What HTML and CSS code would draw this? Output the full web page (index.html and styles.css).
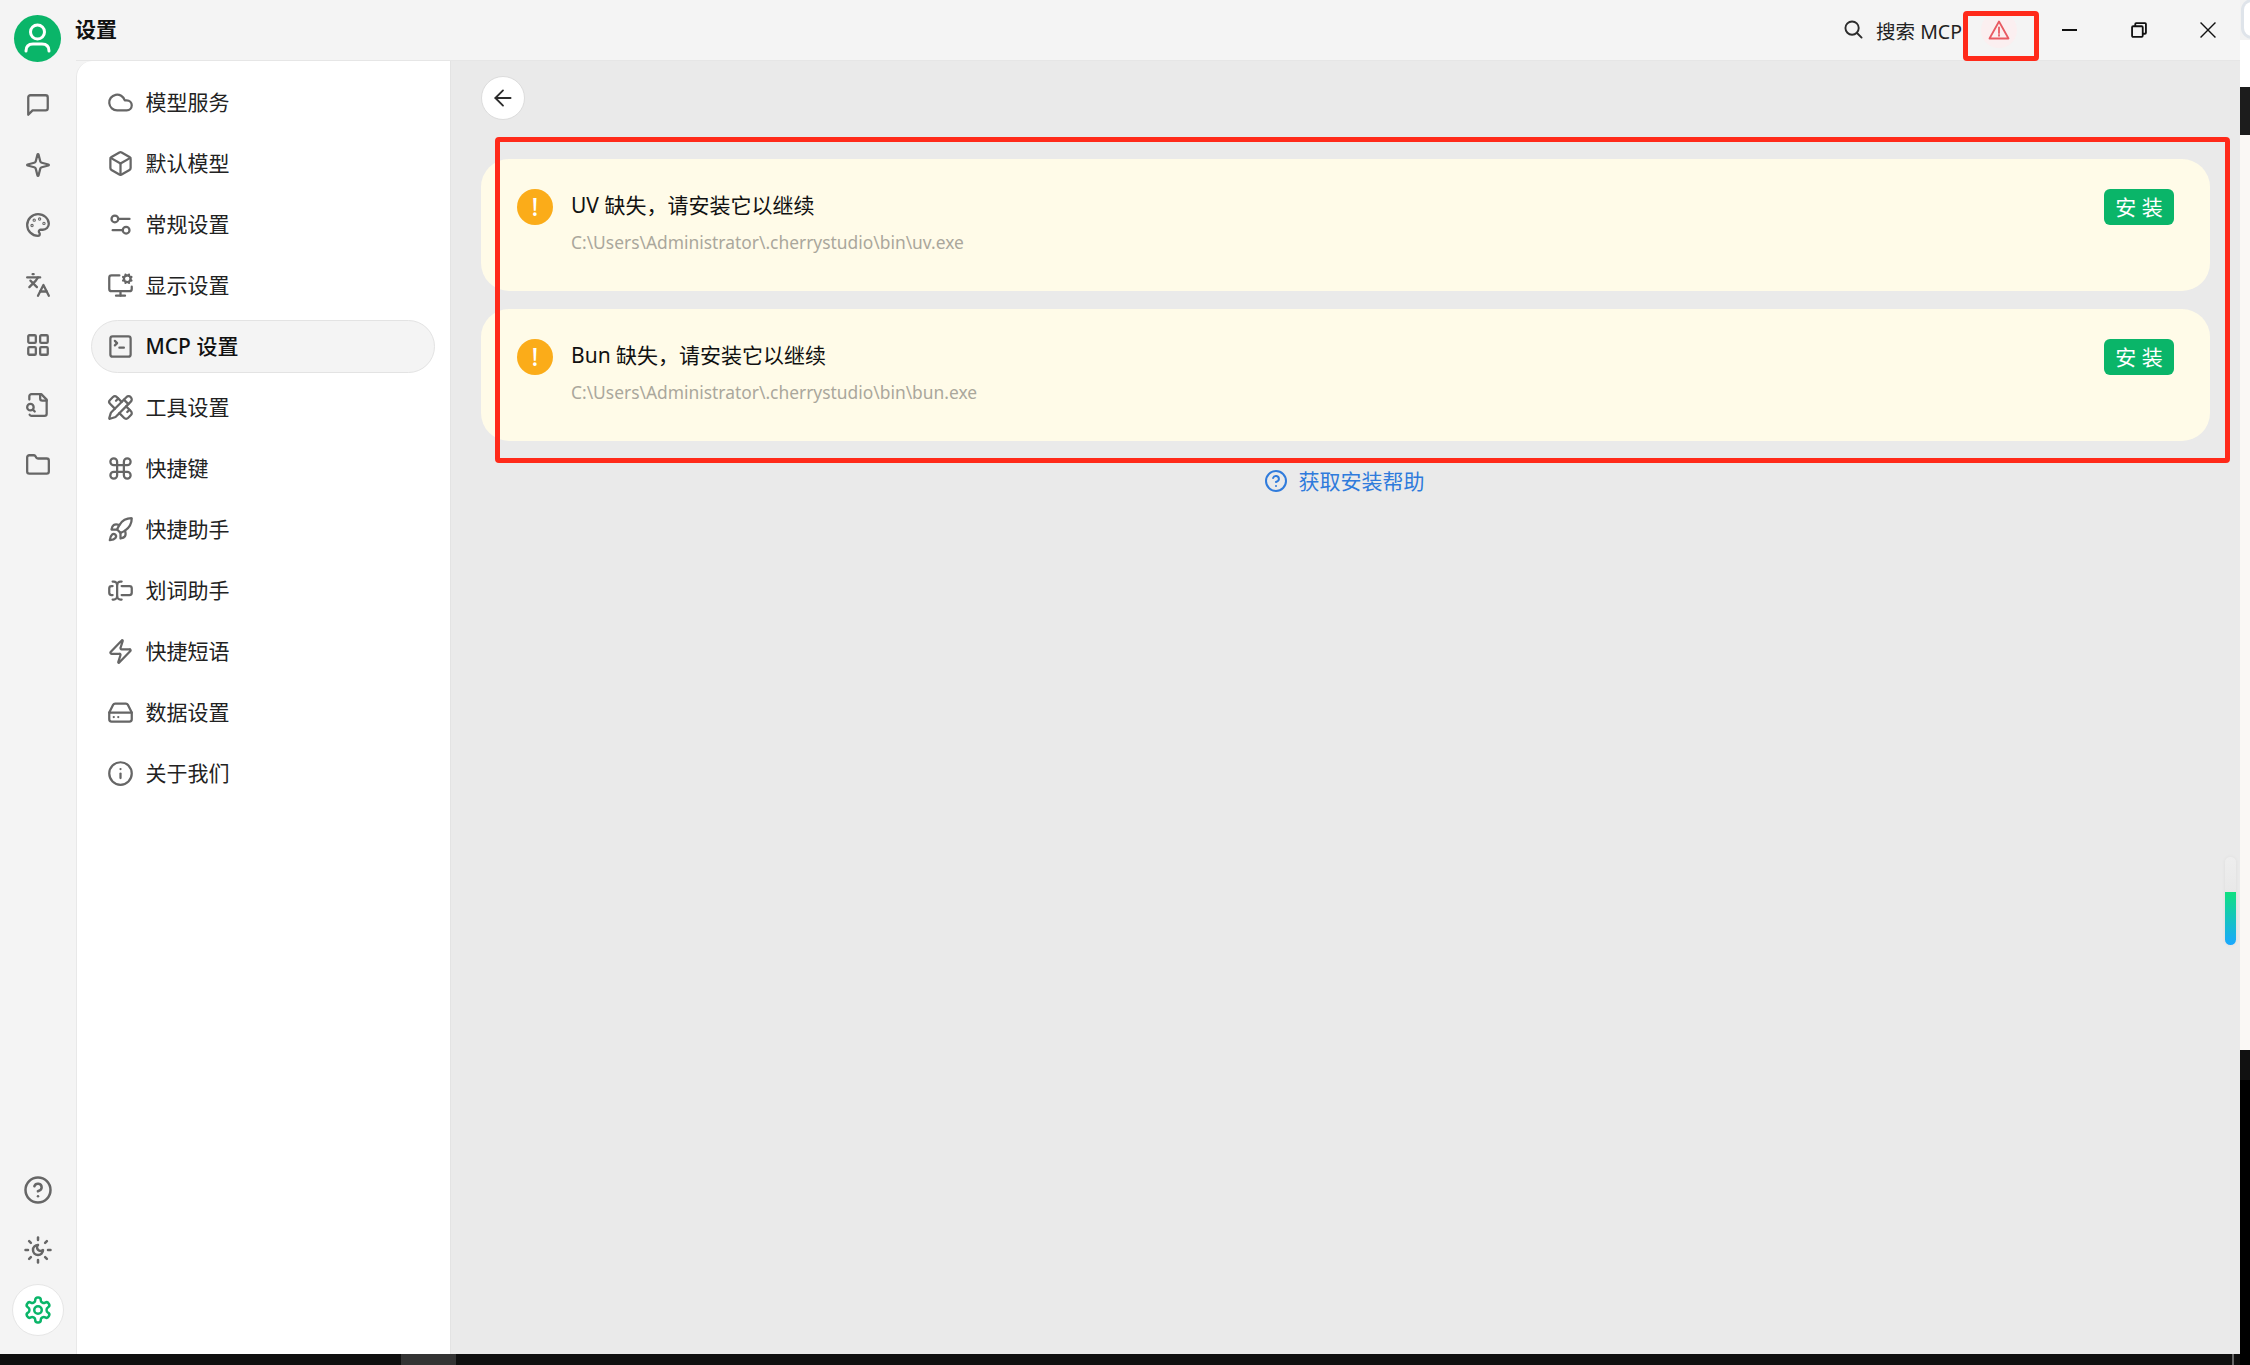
FILE: index.html
```html
<!DOCTYPE html>
<html lang="zh-CN">
<head>
<meta charset="utf-8">
<title>设置</title>
<link rel="stylesheet" href="styles.css">
</head>
<body>
<svg class="sprite" aria-hidden="true">
  <symbol id="i-chat" viewBox="0 0 24 24"><path d="M21 15a2 2 0 0 1-2 2H7l-4 4V5a2 2 0 0 1 2-2h14a2 2 0 0 1 2 2z"/></symbol>
  <symbol id="i-sparkle" viewBox="0 0 24 24"><path d="M9.937 15.5A2 2 0 0 0 8.5 14.063l-6.135-1.582a.5.5 0 0 1 0-.962L8.5 9.936A2 2 0 0 0 9.937 8.5l1.582-6.135a.5.5 0 0 1 .963 0L14.063 8.5A2 2 0 0 0 15.5 9.937l6.135 1.581a.5.5 0 0 1 0 .964L15.5 14.063a2 2 0 0 0-1.437 1.437l-1.582 6.135a.5.5 0 0 1-.963 0z"/></symbol>
  <symbol id="i-palette" viewBox="0 0 24 24"><circle cx="13.5" cy="6.5" r=".5"/><circle cx="17.5" cy="10.5" r=".5"/><circle cx="8.5" cy="7.5" r=".5"/><circle cx="6.5" cy="12.5" r=".5"/><path d="M12 2C6.5 2 2 6.5 2 12s4.5 10 10 10c.926 0 1.648-.746 1.648-1.688 0-.437-.18-.835-.437-1.125-.29-.289-.438-.652-.438-1.125a1.64 1.64 0 0 1 1.668-1.668h1.996c3.051 0 5.555-2.503 5.555-5.554C21.965 6.012 17.461 2 12 2z"/></symbol>
  <symbol id="i-lang" viewBox="0 0 24 24"><path d="m5 8 6 6"/><path d="m4 14 6-6 2-3"/><path d="M2 5h12"/><path d="M7 2h1"/><path d="m22 22-5-10-5 10"/><path d="M14 18h6"/></symbol>
  <symbol id="i-grid" viewBox="0 0 24 24"><rect x="3" y="3" width="7" height="7" rx="1"/><rect x="14" y="3" width="7" height="7" rx="1"/><rect x="14" y="14" width="7" height="7" rx="1"/><rect x="3" y="14" width="7" height="7" rx="1"/></symbol>
  <symbol id="i-filesearch" viewBox="0 0 24 24"><path d="M14 2v4a2 2 0 0 0 2 2h4"/><path d="M4.268 21a2 2 0 0 0 1.727 1H18a2 2 0 0 0 2-2V7l-5-5H6a2 2 0 0 0-2 2v3"/><path d="m9 18-1.5-1.5"/><circle cx="5" cy="14" r="3"/></symbol>
  <symbol id="i-folder" viewBox="0 0 24 24"><path d="M20 20a2 2 0 0 0 2-2V8a2 2 0 0 0-2-2h-7.9a2 2 0 0 1-1.69-.9L9.6 3.9A2 2 0 0 0 7.93 3H4a2 2 0 0 0-2 2v13a2 2 0 0 0 2 2Z"/></symbol>
  <symbol id="i-help" viewBox="0 0 24 24"><circle cx="12" cy="12" r="10"/><path d="M9.09 9a3 3 0 0 1 5.83 1c0 2-3 3-3 3"/><path d="M12 17h.01"/></symbol>
  <symbol id="i-sunmoon" viewBox="0 0 24 24"><path d="M12 8a2.83 2.83 0 0 0 4 4 4 4 0 1 1-4-4"/><path d="M12 2v2"/><path d="M12 20v2"/><path d="m4.9 4.9 1.4 1.4"/><path d="m17.7 17.7 1.4 1.4"/><path d="M2 12h2"/><path d="M20 12h2"/><path d="m6.3 17.7-1.4 1.4"/><path d="m19.1 4.9-1.4 1.4"/></symbol>
  <symbol id="i-gear" viewBox="0 0 24 24"><path d="M12.22 2h-.44a2 2 0 0 0-2 2v.18a2 2 0 0 1-1 1.73l-.43.25a2 2 0 0 1-2 0l-.15-.08a2 2 0 0 0-2.73.73l-.22.38a2 2 0 0 0 .73 2.73l.15.1a2 2 0 0 1 1 1.72v.51a2 2 0 0 1-1 1.74l-.15.09a2 2 0 0 0-.73 2.73l.22.38a2 2 0 0 0 2.73.73l.15-.08a2 2 0 0 1 2 0l.43.25a2 2 0 0 1 1 1.73V20a2 2 0 0 0 2 2h.44a2 2 0 0 0 2-2v-.18a2 2 0 0 1 1-1.73l.43-.25a2 2 0 0 1 2 0l.15.08a2 2 0 0 0 2.73-.73l.22-.39a2 2 0 0 0-.73-2.73l-.15-.08a2 2 0 0 1-1-1.74v-.5a2 2 0 0 1 1-1.74l.15-.09a2 2 0 0 0 .73-2.73l-.22-.38a2 2 0 0 0-2.73-.73l-.15.08a2 2 0 0 1-2 0l-.43-.25a2 2 0 0 1-1-1.73V4a2 2 0 0 0-2-2z"/><circle cx="12" cy="12" r="3"/></symbol>
  <symbol id="i-cloud" viewBox="0 0 24 24"><path d="M17.5 19H9a7 7 0 1 1 6.71-9h1.79a4.5 4.5 0 1 1 0 9Z"/></symbol>
  <symbol id="i-box" viewBox="0 0 24 24"><path d="M21 8a2 2 0 0 0-1-1.73l-7-4a2 2 0 0 0-2 0l-7 4A2 2 0 0 0 3 8v8a2 2 0 0 0 1 1.73l7 4a2 2 0 0 0 2 0l7-4A2 2 0 0 0 21 16Z"/><path d="m3.3 7 8.7 5 8.7-5"/><path d="M12 22V12"/></symbol>
  <symbol id="i-sliders" viewBox="0 0 24 24"><path d="M20 7h-9"/><path d="M14 17H5"/><circle cx="17" cy="17" r="3"/><circle cx="7" cy="7" r="3"/></symbol>
  <symbol id="i-monitor" viewBox="0 0 24 24"><path d="M12 17v4"/><path d="m14.305 7.53.923-.382"/><path d="m15.228 4.852-.923-.383"/><path d="m16.852 3.228-.383-.924"/><path d="m16.852 8.772-.383.923"/><path d="m19.148 3.228.383-.924"/><path d="m19.53 9.696-.382-.924"/><path d="m20.772 4.852.924-.383"/><path d="m20.772 7.148.924.383"/><path d="M22 13v2a2 2 0 0 1-2 2H4a2 2 0 0 1-2-2V5a2 2 0 0 1 2-2h7"/><path d="M8 21h8"/><circle cx="18" cy="6" r="3"/></symbol>
  <symbol id="i-terminal" viewBox="0 0 24 24"><path d="m7 11 2-2-2-2"/><path d="M11 13h4"/><rect x="3" y="3" width="18" height="18" rx="2"/></symbol>
  <symbol id="i-tools" viewBox="0 0 24 24"><path d="M13 7 8.7 2.7a2.41 2.41 0 0 0-3.4 0L2.7 5.3a2.41 2.41 0 0 0 0 3.4L7 13"/><path d="m8 6 2-2"/><path d="m18 16 2-2"/><path d="m17 11 4.3 4.3c.94.94.94 2.46 0 3.4l-2.6 2.6c-.94.94-2.46.94-3.4 0L11 17"/><path d="M21.174 6.812a1 1 0 0 0-3.986-3.987L3.842 16.174a2 2 0 0 0-.5.83l-1.321 4.352a.5.5 0 0 0 .623.622l4.353-1.32a2 2 0 0 0 .83-.497z"/><path d="m15 5 4 4"/></symbol>
  <symbol id="i-command" viewBox="0 0 24 24"><path d="M15 6v12a3 3 0 1 0 3-3H6a3 3 0 1 0 3 3V6a3 3 0 1 0-3 3h12a3 3 0 1 0-3-3"/></symbol>
  <symbol id="i-rocket" viewBox="0 0 24 24"><path d="M4.5 16.5c-1.5 1.26-2 5-2 5s3.74-.5 5-2c.71-.84.7-2.13-.09-2.91a2.18 2.18 0 0 0-2.91-.09z"/><path d="m12 15-3-3a22 22 0 0 1 2-3.95A12.88 12.88 0 0 1 22 2c0 2.72-.78 7.5-6 11a22.35 22.35 0 0 1-4 2z"/><path d="M9 12H4s.55-3.03 2-4c1.62-1.08 5 0 5 0"/><path d="M12 15v5s3.03-.55 4-2c1.08-1.62 0-5 0-5"/></symbol>
  <symbol id="i-cursor" viewBox="0 0 24 24"><path d="M5 4h1a3 3 0 0 1 3 3 3 3 0 0 1 3-3h1"/><path d="M13 20h-1a3 3 0 0 1-3-3 3 3 0 0 1-3 3H5"/><path d="M5 16H4a2 2 0 0 1-2-2v-4a2 2 0 0 1 2-2h1"/><path d="M13 8h7a2 2 0 0 1 2 2v4a2 2 0 0 1-2 2h-7"/><path d="M9 7v10"/></symbol>
  <symbol id="i-zap" viewBox="0 0 24 24"><path d="M4 14a1 1 0 0 1-.78-1.63l9.9-10.2a.5.5 0 0 1 .86.46l-1.92 6.02A1 1 0 0 0 13 10h7a1 1 0 0 1 .78 1.63l-9.9 10.2a.5.5 0 0 1-.86-.46l1.92-6.02A1 1 0 0 0 11 14z"/></symbol>
  <symbol id="i-drive" viewBox="0 0 24 24"><path d="M22 12H2"/><path d="M5.45 5.11 2 12v6a2 2 0 0 0 2 2h16a2 2 0 0 0 2-2v-6l-3.45-6.89A2 2 0 0 0 16.76 4H7.24a2 2 0 0 0-1.79 1.11z"/><path d="M6 16h.01"/><path d="M10 16h.01"/></symbol>
  <symbol id="i-info" viewBox="0 0 24 24"><circle cx="12" cy="12" r="10"/><path d="M12 16v-4"/><path d="M12 8h.01"/></symbol>
</svg>

<div class="page">
  <div class="window">
    <aside class="rail">
      <div class="avatar">
        <svg class="avatar-icon" viewBox="0 0 47 47"><circle cx="23.5" cy="17" r="7"/><path d="M12 36c0-5 3-7 7-7h9c4 0 7 2 7 7"/></svg>
      </div>
      <nav class="rail-list">
        <div class="rail-item"><svg class="icon rail-icon"><use href="#i-chat"/></svg></div>
        <div class="rail-item"><svg class="icon rail-icon"><use href="#i-sparkle"/></svg></div>
        <div class="rail-item"><svg class="icon rail-icon"><use href="#i-palette"/></svg></div>
        <div class="rail-item"><svg class="icon rail-icon"><use href="#i-lang"/></svg></div>
        <div class="rail-item"><svg class="icon rail-icon"><use href="#i-grid"/></svg></div>
        <div class="rail-item"><svg class="icon rail-icon"><use href="#i-filesearch"/></svg></div>
        <div class="rail-item"><svg class="icon rail-icon"><use href="#i-folder"/></svg></div>
      </nav>
      <div class="rail-bottom">
        <div class="rail-item"><svg class="icon rail-icon-lg"><use href="#i-help"/></svg></div>
        <div class="rail-item"><svg class="icon rail-icon-lg"><use href="#i-sunmoon"/></svg></div>
        <div class="rail-item"><span class="rail-active"><svg class="icon rail-icon-lg icon-green"><use href="#i-gear"/></svg></span></div>
      </div>
    </aside>

    <div class="main">
      <header class="titlebar">
        <div class="app-title">设置</div>
        <div class="title-actions">
          <div class="search">
            <svg class="icon search-icon" viewBox="0 0 20 20"><circle cx="8.500" cy="8.500" r="7"/><path d="m13.700 13.700 4.800 4.800"/></svg>
            <span>搜索 MCP</span>
          </div>
          <div class="warn-btn">
            <svg class="warn-tri" viewBox="0 0 22 20"><path d="M11 1.500 20.500 18.500H1.500Z"/><path d="M11 7.500v5.500"/><path d="M11 15v.8"/></svg>
          </div>
          <div class="win-controls">
            <div class="win-btn"><span class="win-min"></span></div>
            <div class="win-btn"><svg class="win-svg" viewBox="0 0 15 15"><rect x="1" y="4" width="10" height="10" rx="1"/><path d="M4 4V1.800a.8.8 0 0 1 .8-.8H13.200a.8.8 0 0 1 .8.8V10a1 1 0 0 1-1 1H11"/></svg></div>
            <div class="win-btn"><svg class="win-svg win-close" viewBox="0 0 15 15"><path d="M.5.500 14.500 14.500M14.500.500.5 14.500"/></svg></div>
          </div>
        </div>
      </header>

      <div class="content-row">
        <nav class="settings-nav">
          <a class="nav-item"><svg class="icon nav-icon"><use href="#i-cloud"/></svg><span class="nav-label">模型服务</span></a>
          <a class="nav-item"><svg class="icon nav-icon"><use href="#i-box"/></svg><span class="nav-label">默认模型</span></a>
          <a class="nav-item"><svg class="icon nav-icon"><use href="#i-sliders"/></svg><span class="nav-label">常规设置</span></a>
          <a class="nav-item"><svg class="icon nav-icon"><use href="#i-monitor"/></svg><span class="nav-label">显示设置</span></a>
          <a class="nav-item active"><svg class="icon nav-icon"><use href="#i-terminal"/></svg><span class="nav-label">MCP 设置</span></a>
          <a class="nav-item"><svg class="icon nav-icon"><use href="#i-tools"/></svg><span class="nav-label">工具设置</span></a>
          <a class="nav-item"><svg class="icon nav-icon"><use href="#i-command"/></svg><span class="nav-label">快捷键</span></a>
          <a class="nav-item"><svg class="icon nav-icon"><use href="#i-rocket"/></svg><span class="nav-label">快捷助手</span></a>
          <a class="nav-item"><svg class="icon nav-icon"><use href="#i-cursor"/></svg><span class="nav-label">划词助手</span></a>
          <a class="nav-item"><svg class="icon nav-icon"><use href="#i-zap"/></svg><span class="nav-label">快捷短语</span></a>
          <a class="nav-item"><svg class="icon nav-icon"><use href="#i-drive"/></svg><span class="nav-label">数据设置</span></a>
          <a class="nav-item"><svg class="icon nav-icon"><use href="#i-info"/></svg><span class="nav-label">关于我们</span></a>
        </nav>

        <main class="panel">
          <div class="back-btn">
            <svg class="icon back-icon" viewBox="0 0 24 24"><path d="m12 19-7-7 7-7"/><path d="M19 12H5"/></svg>
          </div>
          <section class="cards">
            <article class="card">
              <span class="card-warn">!</span>
              <div class="card-body">
                <div class="card-title">UV 缺失，请安装它以继续</div>
                <div class="card-path">C:\Users\Administrator\.cherrystudio\bin\uv.exe</div>
              </div>
              <button class="install">安 装</button>
            </article>
            <article class="card">
              <span class="card-warn">!</span>
              <div class="card-body">
                <div class="card-title">Bun 缺失，请安装它以继续</div>
                <div class="card-path">C:\Users\Administrator\.cherrystudio\bin\bun.exe</div>
              </div>
              <button class="install">安 装</button>
            </article>
          </section>
          <a class="help-link">
            <svg class="icon help-icon"><use href="#i-help"/></svg>获取安装帮助
          </a>
          <div class="mini-scroll"><span class="mini-fill"></span></div>
        </main>
      </div>
    </div>

    <div class="mark mark-warn"></div>
    <div class="mark mark-cards"></div>
  </div>

  <div class="edge">
    <div class="edge-a"><span class="edge-pill"></span></div>
    <div class="edge-b"></div>
    <div class="edge-c"></div>
    <div class="edge-d"></div>
    <div class="edge-e"></div>
    <div class="edge-f"></div>
  </div>

  <div class="taskbar">
    <span class="task-a"></span>
    <span class="task-b"></span>
  </div>
</div>
</body>
</html>
```

FILE: styles.css
```css
* { box-sizing: border-box; }
html, body { margin: 0; padding: 0; height: 1365px; overflow: hidden; }
body {
  width: 2250px;
  background: #000;
  font-family: "Noto Sans", "Noto Sans CJK SC", sans-serif;
  color: #1a1a1a;
}
.sprite { position: absolute; width: 0; height: 0; }

.page {
  display: grid;
  grid-template-columns: 2240px 10px;
  grid-template-rows: 1354px 11px;
  width: 2250px;
  height: 1365px;
}

.window {
  position: relative;
  display: flex;
  background: #f4f4f4;
  min-height: 0;
}

.icon {
  fill: none;
  stroke: #666;
  stroke-width: 2;
  stroke-linecap: round;
  stroke-linejoin: round;
  flex: none;
}

/* left rail */
.rail {
  width: 76px;
  flex: none;
  display: flex;
  flex-direction: column;
  padding: 15px 1px 14px 0;
}
.avatar {
  width: 47px;
  height: 47px;
  margin-left: 14px;
  border-radius: 50%;
  background: #0ab569;
  flex: none;
}
.avatar-icon {
  display: block;
  width: 47px;
  height: 47px;
  fill: none;
  stroke: #fff;
  stroke-width: 3;
  stroke-linecap: round;
}
.rail-list { margin-top: 13px; }
.rail-bottom { margin-top: auto; }
.rail-item {
  height: 60px;
  display: flex;
  align-items: center;
  justify-content: center;
}
.rail-icon { width: 26px; height: 26px; stroke-width: 2.100; }
.rail-icon-lg { width: 30px; height: 30px; }
.rail-active {
  width: 52px;
  height: 52px;
  border-radius: 50%;
  background: #fff;
  border: 1px solid #e6e6e6;
  display: flex;
  align-items: center;
  justify-content: center;
}
.icon-green { stroke: #0ab569; }

/* titlebar */
.main {
  flex: 1;
  min-width: 0;
  display: flex;
  flex-direction: column;
}
.titlebar {
  height: 61px;
  flex: none;
  display: flex;
  align-items: flex-start;
  justify-content: space-between;
  border-bottom: 1px solid #e6e6e6;
}
.app-title {
  font-size: 21px;
  font-weight: 700;
  line-height: 30px;
  margin: 14px 0 0 -1px;
  color: #111;
}
.title-actions {
  display: flex;
  align-items: center;
  height: 60px;
  margin-right: -2px;
}
.search {
  display: flex;
  align-items: center;
  gap: 13px;
  font-size: 19.500px;
  color: #222;
}
.search-icon { width: 19px; height: 19px; stroke: #2c2c2c; margin-bottom: 2px; }
.warn-btn {
  width: 36px;
  height: 36px;
  margin-left: 19px;
  margin-right: 18px;
  border-radius: 50%;
  background: #fbeff0;
  display: flex;
  align-items: center;
  justify-content: center;
}
.warn-tri {
  width: 22px;
  height: 20px;
  fill: none;
  stroke: #e85a62;
  stroke-width: 1.800;
  stroke-linejoin: round;
  stroke-linecap: round;
}
.win-controls { display: flex; }
.win-btn {
  width: 69px;
  height: 58px;
  display: flex;
  align-items: center;
  justify-content: center;
}
.win-min { width: 15px; height: 2px; background: #111; }
.win-svg {
  width: 16px;
  height: 16px;
  fill: none;
  stroke: #111;
  stroke-width: 1.700;
}
.win-close { stroke-width: 1.300; }

/* settings nav */
.content-row {
  flex: 1;
  min-height: 0;
  display: flex;
  background: #f4f4f4;
}
.settings-nav {
  width: 375px;
  flex: none;
  background: #fff;
  border-top-left-radius: 16px;
  border-left: 1px solid #e8e8e8;
  border-right: 1px solid #e3e3e3;
  padding: 15px 15px 15px 14px;
  display: flex;
  flex-direction: column;
  gap: 8px;
}
.nav-item {
  height: 53px;
  flex: none;
  display: flex;
  align-items: center;
  gap: 11.500px;
  padding: 0 15px;
  border-radius: 27px;
  border: 1px solid transparent;
  font-size: 21px;
  color: #222;
}
.nav-label { margin-bottom: 3px; }
.nav-item.active {
  background: #f4f4f4;
  border-color: #e3e3e3;
  font-weight: 500;
  color: #111;
}
.nav-icon { width: 27px; height: 27px; }

/* panel */
.panel {
  position: relative;
  flex: 1;
  min-width: 0;
  background: #eaeaea;
  padding: 15px 30px 0 30px;
}
.back-btn {
  width: 44px;
  height: 44px;
  border-radius: 50%;
  background: #fff;
  border: 1px solid #dcdcdc;
  display: flex;
  align-items: center;
  justify-content: center;
}
.back-icon { width: 26px; height: 26px; stroke: #2c2c2c; stroke-width: 1.700; }
.cards {
  margin-top: 39px;
  display: flex;
  flex-direction: column;
  gap: 18px;
}
.card {
  height: 132px;
  border-radius: 28px;
  background: #fffbe8;
  padding: 30px 36px 0 36px;
  display: flex;
  align-items: flex-start;
}
.card-warn {
  width: 36px;
  height: 36px;
  flex: none;
  border-radius: 50%;
  background: #fbac19;
  color: #fff;
  font-size: 25px;
  font-weight: 500;
  line-height: 35px;
  text-align: center;
}
.card-body {
  flex: 1;
  min-width: 0;
  margin: -2px 0 0 18px;
}
.card-title {
  font-size: 21px;
  line-height: 36px;
  color: #111;
}
.card-path {
  margin-top: 7px;
  font-size: 17.400px;
  line-height: 24px;
  color: #aaa79c;
}
.install {
  width: 70px;
  height: 36px;
  flex: none;
  padding: 0;
  border: 0;
  border-radius: 6px;
  background: #0ab569;
  color: #fff;
  font: inherit;
  font-size: 21px;
  line-height: 36px;
}

.help-link {
  display: flex;
  align-items: center;
  justify-content: center;
  gap: 11px;
  margin-top: 25px;
  padding-right: 3px;
  font-size: 21px;
  line-height: 30px;
  color: #2f7bdc;
}
.help-icon { width: 24px; height: 24px; stroke: #2f7bdc; }

.mini-scroll {
  position: absolute;
  right: 4px;
  top: 796px;
  width: 11px;
  height: 88px;
  border-radius: 6px;
  background: linear-gradient(180deg, #eeeeee, #dfdfdf);
  box-shadow: 0 0 4px rgba(0, 0, 0, .06);
  overflow: hidden;
  display: flex;
  align-items: flex-end;
}
.mini-fill {
  width: 100%;
  height: 53px;
  background: linear-gradient(180deg, #10e080, #1aa8ff);
}

/* annotation boxes drawn over the screenshot */
.mark {
  position: absolute;
  border: 5px solid #ff2a1a;
  border-radius: 4px;
  pointer-events: none;
}
.mark-warn { left: 1963px; top: 11px; width: 76px; height: 50px; }
.mark-cards { left: 495px; top: 137px; width: 1735px; height: 326px; }

/* right edge and bottom bar of the desktop behind */
.edge {
  grid-column: 2;
  grid-row: 1 / 3;
  display: flex;
  flex-direction: column;
  background: #000;
}
.edge-a { height: 40px; background: #f2f2f2; overflow: hidden; }
.edge-pill { display: block; width: 20px; height: 34px; margin-left: 4px; margin-top: 2px; background: #fff; border-radius: 8px; box-shadow: 0 0 0 3px #dfe4ea; }
.edge-b { height: 47px; background: #fff; }
.edge-c { height: 48px; background: #1c1c1c; }
.edge-d { height: 915px; background: #faf8f5; }
.edge-e { height: 30px; background: #111; }
.edge-f { flex: 1; background: #000; }

.taskbar {
  grid-column: 1;
  grid-row: 2;
  background: #0f0f0f;
  display: flex;
}
.task-a { width: 55px; margin-left: 401px; background: #333; }
.task-b { width: 2px; margin-left: 1776px; background: #666; }
```
